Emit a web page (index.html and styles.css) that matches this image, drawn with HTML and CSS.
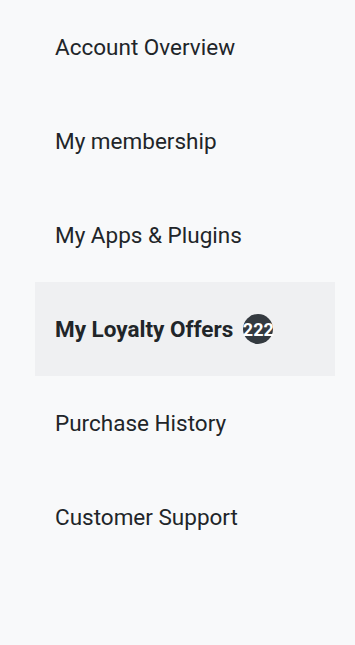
FILE: index.html
```html
<!DOCTYPE html>
<html lang="en">
<head>
  <meta charset="UTF-8" />
  <meta name="viewport" content="width=device-width, initial-scale=1.0"/>
  <title>Account</title>
  <link rel="stylesheet" href="styles.css">
</head>
<body>
  <nav class="side-nav">
    <a href="#" class="nav-item">Account Overview</a>
    <a href="#" class="nav-item">My membership</a>
    <a href="#" class="nav-item">My Apps &amp; Plugins</a>
    <a href="#" class="nav-item active">My Loyalty Offers <span class="badge">222</span></a>
    <a href="#" class="nav-item">Purchase History</a>
    <a href="#" class="nav-item">Customer Support</a>
  </nav>
</body>
</html>
```

FILE: styles.css
```css
* { margin: 0; padding: 0; box-sizing: border-box; }
body {
  font-family: Roboto, 'Liberation Sans', sans-serif;
  background: #f8f9fa;
  color: #212529;
  min-height: 100vh;
}
.side-nav {
  width: 300px;
  margin-left: 35px;
  display: flex;
  flex-direction: column;
}
.nav-item {
  height: 94px;
  padding: 0 20px;
  display: flex;
  align-items: center;
  font-size: 22.5px;
  color: #212529;
  text-decoration: none;
}
.nav-item.active {
  background: #eff0f2;
  font-weight: bold;
}
.badge {
  width: 30px;
  height: 30px;
  margin-left: 10px;
  border-radius: 50%;
  background: #343a40;
  color: #fff;
  font-size: 18px;
  font-weight: bold;
  display: flex;
  align-items: center;
  justify-content: center;
}
```
